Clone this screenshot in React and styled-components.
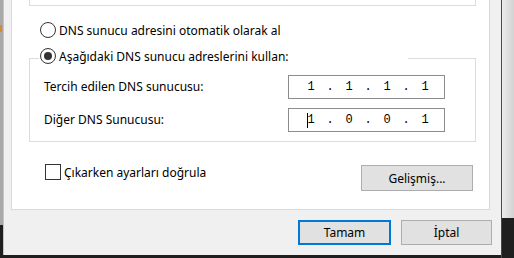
import React from 'react'
import styled, { createGlobalStyle } from 'styled-components'

const GlobalStyle = createGlobalStyle`
  html, body {
    margin: 0;
    padding: 0;
    background: #1f1f1f;
  }
  body {
    font-family: "Noto Sans", "Liberation Sans", sans-serif;
    font-size: 12px;
    color: #000;
  }
`;

const App = () => {
  return (
    <>
      <GlobalStyle />
      <Desktop>
        <LeftEdge>
          <EdgeTop>
            <Spark />
          </EdgeTop>
        </LeftEdge>
        <Dialog>
          <Panel>
            <TopGroup />
            <Option>
              <Radio />
              <span>DNS sunucu adresini otomatik olarak al</span>
            </Option>
            <Group>
              <Legend>
                <Option>
                  <Radio checked />
                  <span>Aşağıdaki DNS sunucu adreslerini kullan:</span>
                </Option>
              </Legend>
              <Fields>
                <FieldLabel>Tercih edilen DNS sunucusu:</FieldLabel>
                <IpBox parts={['1', '1', '1', '1']} />
                <FieldLabel>Diğer DNS Sunucusu:</FieldLabel>
                <IpBox parts={['1', '0', '0', '1']} focused />
              </Fields>
            </Group>
            <BottomRow>
              <Option>
                <Checkbox />
                <span>Çıkarken ayarları doğrula</span>
              </Option>
              <Button $w={112} $h={26}>Gelişmiş...</Button>
            </BottomRow>
          </Panel>
          <Actions>
            <Button $w={93} $primary>Tamam</Button>
            <Button $w={91}>İptal</Button>
          </Actions>
        </Dialog>
        <RightEdge>
          <EdgeTop $right />
        </RightEdge>
      </Desktop>
    </>
  );
}

const IpBox = ({ parts, focused }) => (
  <Ip>
    {parts.map((p, i) => (
      <React.Fragment key={i}>
        {i > 0 && <Dot>.</Dot>}
        <Segment>
          {focused && i === 0 && <Caret />}
          {p}
        </Segment>
      </React.Fragment>
    ))}
  </Ip>
);

export default App


const Desktop = styled.div`
  width: 514px;
  height: 258px;
  display: flex;
  overflow: hidden;
`;

const LeftEdge = styled.div`
  width: 3px;
  display: flex;
  flex-direction: column;
`;

const EdgeTop = styled.div`
  height: ${p => (p.$right ? '218px' : '225px')};
  background: ${p =>
    p.$right
      ? 'linear-gradient(90deg, #ececec, #d2d2d2)'
      : '#a9a9a9'};
  padding-top: 25px;
  box-sizing: border-box;
`;

const Spark = styled.div`
  width: 2px;
  height: 7px;
  background: #d98a2b;
`;

const RightEdge = styled.div`
  flex: 1;
  display: flex;
  flex-direction: column;
  border-left: 1px solid #4a4a4a;
`;

const Dialog = styled.div`
  width: 498px;
  height: 255px;
  box-sizing: border-box;
  background: #f0f0f0;
  border-left: 1px solid #c4c4c4;
  padding-left: 7px;
  padding-right: 9px;
  display: flex;
  flex-direction: column;
`;

const Panel = styled.div`
  width: 479px;
  height: 210px;
  box-sizing: border-box;
  background: #fff;
  border: 1px solid #d9d9d9;
  border-top: none;
  padding: 0 13px 0 17px;
`;

const TopGroup = styled.div`
  height: 6px;
  box-sizing: border-box;
  border: 1px solid #dcdcdc;
  border-top: none;
`;

const Option = styled.label`
  display: flex;
  align-items: center;
  gap: 3px;
  height: 16px;
  margin: 16px 0 0 11px;
  white-space: nowrap;
`;

const Radio = styled.span`
  width: 16px;
  height: 16px;
  box-sizing: border-box;
  border-radius: 50%;
  border: 1px solid #333;
  background: #fff;
  display: flex;
  align-items: center;
  justify-content: center;
  flex-shrink: 0;

  &::after {
    content: '';
    width: 8px;
    height: 8px;
    border-radius: 50%;
    background: #333;
    display: ${p => (p.checked ? 'block' : 'none')};
  }
`;

const Checkbox = styled.span`
  width: 16px;
  height: 16px;
  box-sizing: border-box;
  border: 1px solid #333;
  background: #fff;
  flex-shrink: 0;
`;

const Group = styled.fieldset`
  margin: 10px 0 0;
  padding: 0 0 9px 0;
  border: 1px solid #dcdcdc;
  min-width: 0;
`;

const Legend = styled.legend`
  width: 369px;
  box-sizing: border-box;
  padding: 0 2px 4px 1px;
  margin-left: 9px;

  ${Option} {
    margin: 0;
  }
`;

const Fields = styled.div`
  display: grid;
  grid-template-columns: 244px 157px;
  grid-auto-rows: 24px;
  row-gap: 9px;
  align-items: center;
  margin: 7px 0 0 14px;
`;

const FieldLabel = styled.div`
  margin-top: -2px;
`;

const Ip = styled.div`
  height: 24px;
  box-sizing: border-box;
  border: 1px solid #8c8c8c;
  background: #fff;
  display: flex;
  align-items: center;
  padding-left: 9px;
  font-family: "Liberation Mono", monospace;
  font-size: 12px;
`;

const Segment = styled.span`
  width: 26px;
  display: flex;
  justify-content: center;
  align-items: center;
`;

const Dot = styled.span`
  width: 12px;
  text-align: center;
`;

const Caret = styled.span`
  width: 1px;
  height: 15px;
  background: #000;
  margin-right: -1px;
`;

const BottomRow = styled.div`
  display: flex;
  justify-content: space-between;
  align-items: flex-start;
  margin-top: 22px;
  padding-right: 3px;

  ${Option} {
    margin: 0 0 0 16px;
  }
  & > button {
    margin-top: 1px;
  }
`;

const Button = styled.button`
  width: ${p => p.$w}px;
  height: ${p => p.$h || 25}px;
  box-sizing: border-box;
  background: #e1e1e1;
  border: ${p => (p.$primary ? '2px solid #0078d7' : '1px solid #adadad')};
  font-family: "Noto Sans", "Liberation Sans", sans-serif;
  font-size: 12px;
  color: #000;
  padding: 0;
`;

const Actions = styled.div`
  display: flex;
  justify-content: flex-end;
  gap: 10px;
  margin-top: 10px;
`;
